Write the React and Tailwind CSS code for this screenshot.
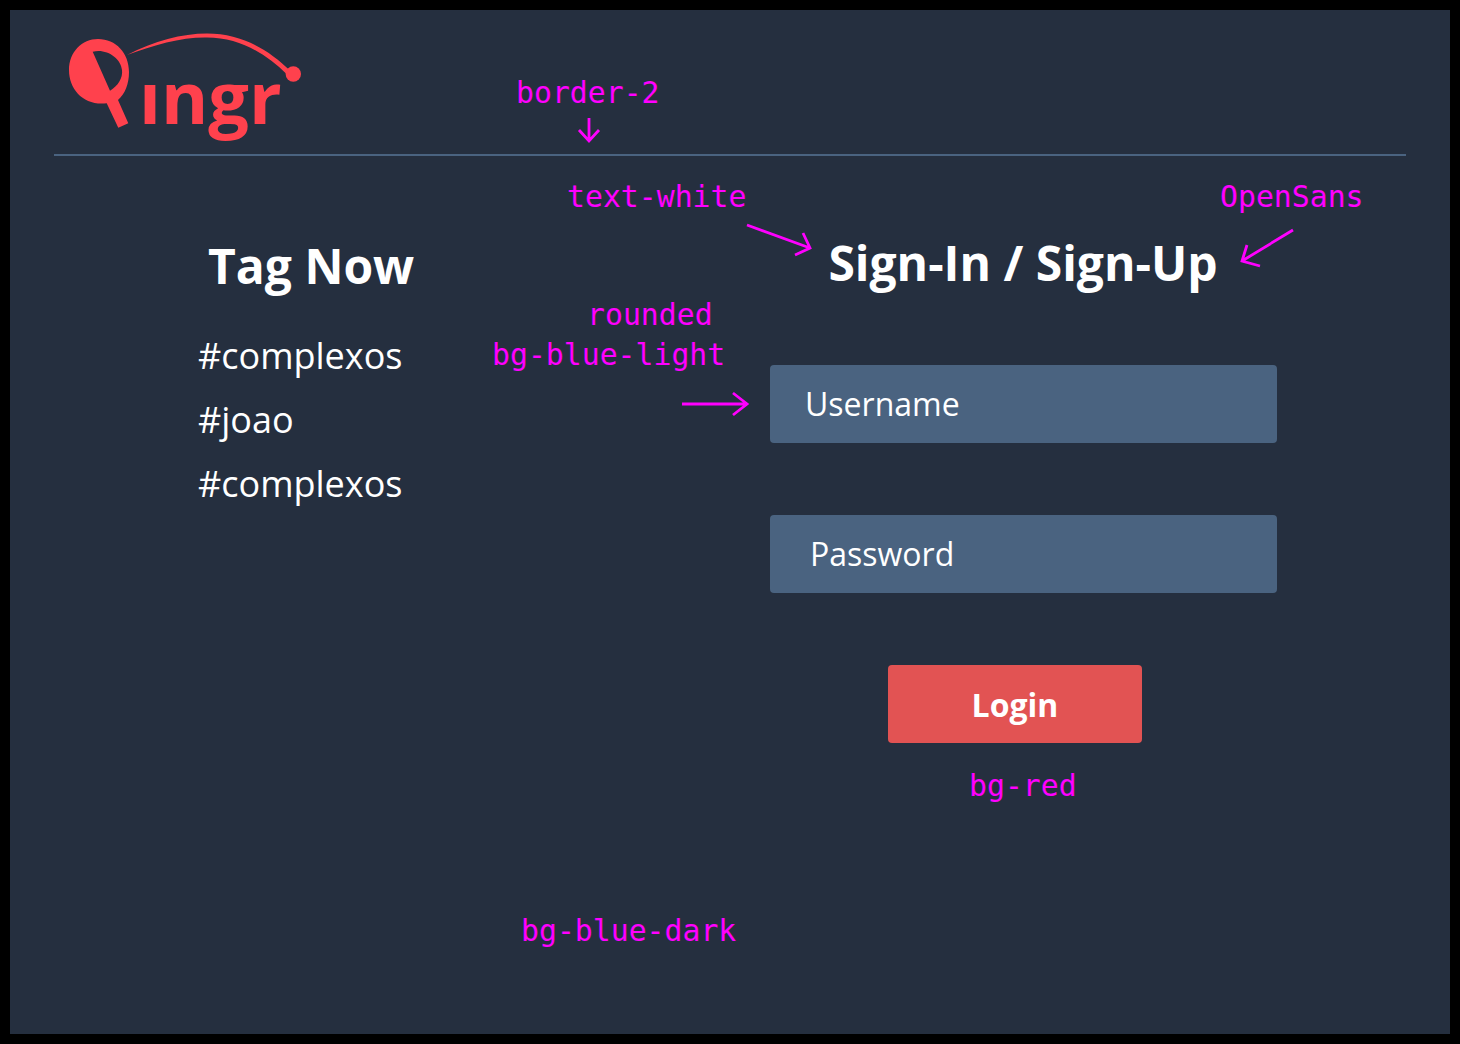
const mono = "font-['DejaVu_Sans_Mono',monospace]";
const Note = ({ className, children }) => (
  <div className={`absolute text-[29.8px] leading-[36px] whitespace-nowrap text-[#ff00ff] ${mono} ${className}`}>{children}</div>
);
const Arrow = ({ className, d, w, h }) => (
  <svg className={`absolute ${className}`} width={w} height={h} viewBox={`0 0 ${w} ${h}`} fill="none" stroke="#ff00ff" strokeWidth="2.8"><path d={d} /></svg>
);

function Logo() {
  return (
    <div className="relative mt-[10px] h-[132px] w-[260px] shrink-0 pl-[85px] pt-[26px]">
      <svg className="absolute left-0 top-0" width="260" height="132" viewBox="0 0 260 132" fill="none">
        <path fillRule="evenodd" fill="#ff414d" d="M44 19C62 19 75 33 75 52C75 64 71 74 64 80L74.3 103.3L64.3 107.7L52.7 83.3C30 86 15 70 15 50C15 32 28 19 44 19ZM38.7 31.7L56 70.7C64 66 69 58 68 50C67 38 52 28 38.7 31.7Z" />
        <path fill="#ff414d" d="M73 35C100 21 128 13.5 153 13.5C188 13.5 215 30 236.5 51L233 54.5C212 34 186 17.5 153 17.5C128 17 100 25 73 35Z" />
        <circle cx="239.3" cy="54" r="7.7" fill="#ff414d" />
      </svg>
      <div className="font-['Open_Sans',sans-serif] text-[72px] font-bold leading-[100px] text-[#ff414d]">ıngr</div>
    </div>
  );
}

export default function App() {
  return (
    <div className="relative h-[1044px] w-[1460px] overflow-hidden border-[10px] border-black bg-[#252f3f] font-['Open_Sans',sans-serif] text-white">
      <div className="mx-[44px] flex h-[146px] items-start border-b-2 border-[#4a6380]">
        <Logo />
      </div>
      <div className="flex">
        <div className="ml-[188px] w-[572px] pt-[60px]">
          <h2 className="ml-[10px] text-[48px] font-bold leading-[100px]">Tag Now</h2>
          <ul className="mt-[8px] text-[36px] leading-[64px]">
            <li>#complexos</li>
            <li>#joao</li>
            <li>#complexos</li>
          </ul>
        </div>
        <div className="w-[507px] pt-[57px]">
          <h2 className="pr-[1px] text-center text-[48px] font-bold leading-[100px]">Sign-In / Sign-Up</h2>
          <div className="mt-[52px] flex h-[78px] items-center rounded bg-[#4a6380] pl-[35px] text-[32px]">Username</div>
          <div className="mt-[72px] flex h-[78px] items-center rounded bg-[#4a6380] pl-[40px] text-[32px]">Password</div>
          <div className="ml-[118px] mt-[72px] flex h-[78px] w-[254px] items-center justify-center rounded bg-[#e25353] pt-[2px] text-[32px] font-bold">Login</div>
        </div>
      </div>

      <Note className="left-[506px] top-[65px]">border-2</Note>
      <Note className="left-[557px] top-[169px]">text-white</Note>
      <Note className="left-[1210px] top-[169px]">OpenSans</Note>
      <Note className="left-[577px] top-[287px]">rounded</Note>
      <Note className="left-[482px] top-[327px]">bg-blue-light</Note>
      <Note className="left-[959px] top-[758px]">bg-red</Note>
      <Note className="left-[511px] top-[903px]">bg-blue-dark</Note>

      <Arrow className="left-[560px] top-[105px]" w="40" h="30" d="M19 3V26M9 15L19 26L29 15" />
      <Arrow className="left-[730px] top-[205px]" w="80" h="45" d="M7 10L70 33M55 40L70 33L63 18" />
      <Arrow className="left-[1225px] top-[215px]" w="65" h="45" d="M58 5L7 36M12 20L7 36L25 41" />
      <Arrow className="left-[666px] top-[375px]" w="80" h="35" d="M6 19H71M57 8L71 19L57 30" />
    </div>
  );
}
